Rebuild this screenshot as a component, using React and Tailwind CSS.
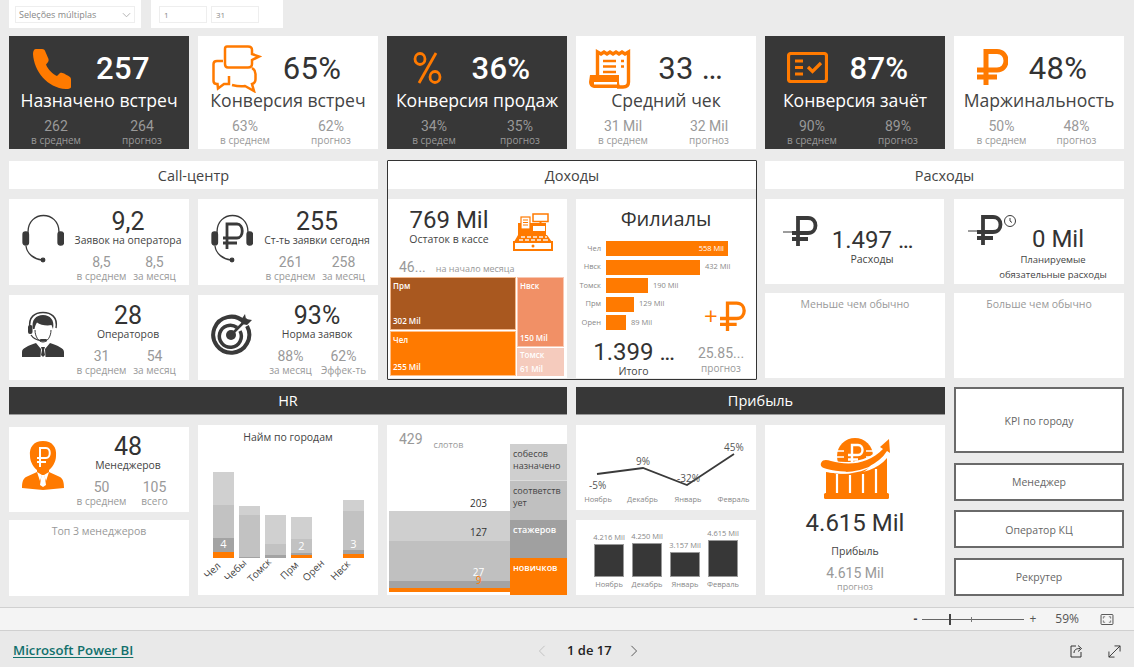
const O = "#ff7a00";
const D = "#3a3a3a";
const Ruble = ({ c = O, w = 4, className = "" }) => (
  <svg viewBox="0 0 32 36" className={className} fill="none" stroke={c} strokeWidth={w}>
    <path d="M10 36V2.500H21C33 2.500 33 21 21 21H1M1 28H21" />
  </svg>
);
const Phone = () => (
  <svg viewBox="0 0 38 40" className="w-[38px] h-[40px] mt-[1px]" fill={O}>
    <path d="M3 0H9C11 0 12 1 12.500 3L15.500 10C16 12 15 13.500 13 15.500C15 21 20 25 24 27L27 24C28.500 23.500 30 23.500 37 28C38 29 38 30 38 31V38C38 39.500 36 40 33 40C14 39 1 22 0 5C0 2 1 0 3 0Z" />
  </svg>
);
const Chat = () => (
  <svg viewBox="0 0 50 48" className="w-[50px] h-[48px]" fill="none" stroke={O} strokeWidth="2.500">
    <path d="M15 1.500H36Q40 1.500 40 5V9L47 11.500L40 15V19Q40 22.500 36 22.500H16Q13 22.500 13 19V4Q13 1.500 15 1.500Z" />
    <path d="M11 16H5Q1.500 16 1.500 19V36Q1.500 39 5 39H5.500L6 43.500L12 39H17V31" />
    <path d="M40 23Q43.500 25 43.500 29V34Q43.500 38 40 39L42 46L33 41Q28 42 20 40" />
  </svg>
);
const Percent = () => (
  <svg viewBox="0 0 29 32" className="w-[29px] h-[32px] -mt-[2px]" fill="none" stroke={O} strokeWidth="2.800">
    <ellipse cx="7" cy="7" rx="5" ry="5.500" />
    <ellipse cx="22" cy="25" rx="5" ry="5.500" />
    <path d="M23 1L6 31" />
  </svg>
);
const Receipt = () => (
  <svg viewBox="0 0 42 40" className="w-[42px] h-[40px]" fill="none" stroke={O} strokeWidth="3.400">
    <path d="M8.500 26V3L12 5L15 3L18 5L21 3L24 5L27 3L30 5L33 3L36 5L39.500 3V33Q39.500 38 34 38H28" />
    <path d="M1 26H30V33Q30 38 34 39H5Q0 38 0 33Z" fill={O} stroke="none" />
    <rect x="5" y="33" width="23" height="2.500" fill="#fff" stroke="none" />
    <path d="M14 12H27M14 17.500H27M14 23H27M32 12H35M32 17.500H35" strokeWidth="2.500" />
  </svg>
);
const Check = () => (
  <svg viewBox="0 0 41 31" className="w-[41px] h-[31px] -mt-[3px]" fill="none" stroke={O} strokeWidth="3.200">
    <rect x="1.500" y="1.500" width="38" height="28" rx="2.500" />
    <path d="M8 9H16M8 15.500H16M8 22H16M21 15L25.500 19.500L34 11" />
  </svg>
);
const Headset = ({ ruble }) => (
  <svg viewBox="0 0 42 50" className="w-[42px] h-[50px]" fill="none" stroke={D} strokeWidth="1.300">
    <path d="M6 20V19C6 -3 37 -3 37 19V20" />
    <rect x="1" y="19" width="5.500" height="13" rx="2.500" fill={D} />
    <rect x="36" y="19" width="5.500" height="13" rx="2.500" fill={D} />
    <path d="M4 33C5 41 12 46 20 47" />
    <circle cx="21" cy="47" r="1.800" fill={D} />
    {ruble && <path d="M16 36V11H26C33 11 33 25 26 25H12M12 30H26" strokeWidth="2.800" />}
  </svg>
);
const Operator = () => (
  <svg viewBox="0 0 42 46" className="w-[42px] h-[46px]" fill={D}>
    <path d="M8 17C6 6 13 1.500 21 1.500C29 1.500 36 6 34 17" fill="none" stroke={D} strokeWidth="1.500" />
    <path d="M11 18C9 9 14 4 21 4C28 4 33 9 31 18L29.500 14C25 15 18 14 15 11.500C14 13 13 15 12.500 18Z" />
    <path d="M13 19C13 26 17 31 21 31C25 31 29 26 29 19" fill="none" stroke={D} strokeWidth="1" />
    <rect x="6" y="14" width="4.500" height="9" rx="2" />
    <path d="M9 24C11 27 14 29 19 29.500" fill="none" stroke={D} strokeWidth="1.300" />
    <rect x="18" y="28" width="7" height="2.500" rx="1" />
    <path d="M0 46V41C0 37 6 35 14 32L19 38L18.500 46H23.500L23 38L28 32C36 35 42 37 42 41V46Z" />
    <path d="M19 36H23L22 39L23 44L21 46L19 44L20 39Z" />
  </svg>
);
const Target = () => (
  <svg viewBox="0 0 42 42" className="w-[42px] h-[42px]" fill="none" stroke={D}>
    <path d="M33 9A18 18 0 1 0 36 13" strokeWidth="4" />
    <path d="M26 14.500A11 11 0 1 0 29 18" strokeWidth="3.500" />
    <circle cx="20" cy="22" r="5" fill={D} stroke="none" />
    <path d="M20 22L36 6" strokeWidth="2.500" />
    <path d="M30 7L34 1L35 6L41 7L36 12L31 11Z" fill={D} stroke="none" />
  </svg>
);
const Register = () => (
  <svg viewBox="0 0 42 38" className="w-[42px] h-[38px]">
    <path d="M5 10H33V23H5Z" fill={O} />
    <rect x="8" y="4" width="9" height="12" fill="#fff" stroke={O} strokeWidth="1.200" />
    <path d="M10 7H15M10 9.500H15M10 12H15" stroke={O} strokeWidth="1" />
    <rect x="20" y="1" width="15" height="7.500" fill="#fff" stroke={O} strokeWidth="1.500" />
    <path d="M27.500 8V11" stroke={O} strokeWidth="2" />
    <rect x="20" y="13" width="12" height="5" fill="#fff" />
    <path d="M5 22H34L39 29H1Z" fill={O} />
    <path d="M8 24H12M14 24H18M20 24H24M26 24H30M32 24H34M6 27H10M12 27H16M18 27H22M24 27H28M30 27H35" stroke="#fbd3ae" strokeWidth="2" />
    <rect x="1" y="29" width="38" height="8" fill="#fff" stroke={O} strokeWidth="2" />
    <circle cx="20" cy="33" r="1.500" fill={O} />
  </svg>
);
const Manager = () => (
  <svg viewBox="0 0 42 49" className="w-[42px] h-[49px]">
    <path d="M21 0C30 0 35 6 34 15C34 21 30 27 27 29L27 31L38 36C41 38 42 41 42 47L21 49L0 47C0 41 1 38 4 36L15 31L15 29C12 27 8 21 8 15C7 6 12 0 21 0Z" fill={O} />
    <path d="M15 31L20 34L18 40ZM27 31L22 34L24 40Z" fill="#fff" />
    <path d="M19.500 34H22.500L24 44L21 46L18 44Z" fill="#fff" />
    <path d="M18 26V7H24C29 7 29 17 24 17H15M15 21H24" stroke="#fff" strokeWidth="2" fill="none" />
  </svg>
);
const Profit = () => (
  <svg viewBox="0 0 72 62" className="w-[72px] h-[62px]">
    <circle cx="36" cy="18" r="18" fill={O} />
    <path d="M17 13H25M17 19H25M47 13H55M47 19H55" stroke="#fff" strokeWidth="1.500" />
    <path d="M33 26V7H39C45 7 45 17 39 17H29M29 21.500H39" stroke="#fff" strokeWidth="2.400" fill="none" />
    <path d="M5 21C20 29 50 29 64 9" stroke="#fff" strokeWidth="4" fill="none" />
    <path d="M7 34C30 38 55 36 68 20V56H7Z" fill={O} />
    <path d="M2 25C4 21 8 22 12 23C30 28 50 26 64 11L61 9L70 1L71 15L68 13C56 32 30 37 8 31C3 30 1 28 2 25Z" fill={O} />
    <path d="M8 33C30 38 56 33 69 14" stroke="#fff" strokeWidth="1.300" fill="none" />
    <path d="M18 36V55M31 37V55M44 36V55M57 31V55" stroke="#fff" strokeWidth="2.200" />
    <rect x="5" y="55" width="65" height="6" rx="1.500" fill={O} />
  </svg>
);
const RubMinus = ({ clock }) => (
  <svg viewBox="0 0 50 34" className="w-[50px] h-[34px]" fill="none" stroke={D} strokeWidth="3.800">
    <path d="M15 30V2H25C35 2 35 17 25 17H9M9 23H25" />
    <path d="M0 16H9" strokeWidth="1" />
    {clock && (
      <g strokeWidth="1">
        <circle cx="42" cy="6" r="5.500" />
        <path d="M42 3V6L44 7.500" />
      </g>
    )}
  </svg>
);
const Ell = () => <span className="tracking-[-1.500px]">...</span>;

const KPI = ({ dark, icon, value, label, a, al, b, bl, w = "w-[180px]", left = "w-[80px]", subs = "px-[4px]", pad = "pl-[24px]" }) => (
  <div className={`${w} h-[113px] flex flex-col shrink-0 ${dark ? "bg-[#373737] text-white" : "bg-white text-[#333]"}`}>
    <div className="h-[53px] flex items-center pt-[12px]">
      <div className={`${left} ${pad} flex items-start shrink-0`}>{icon}</div>
      <div className={`w-[68px] text-center whitespace-nowrap text-[31px] leading-[32px] tracking-[0.3px] ${dark ? "font-medium" : ""} font-['Roboto',sans-serif]`}>{value}</div>
    </div>
    <div className={`-mt-[1px] h-[24px] leading-[24px] text-center whitespace-nowrap text-[17.600px] ${dark ? "" : "text-[#444]"}`}>{label}</div>
    <div className={`grid grid-cols-2 mt-[6px] text-center ${subs}`}>
      <Sub v={a} l={al} />
      <Sub v={b} l={bl} />
    </div>
  </div>
);
const Sub = ({ v, l }) => (
  <div className="flex flex-col items-center text-[#999]">
    <span className="text-[14px] leading-[16px] whitespace-nowrap font-['Roboto',sans-serif]">{v}</span>
    <span className="text-[10px] leading-[12px] whitespace-nowrap">{l}</span>
  </div>
);
const Header = ({ children, dark, className = "" }) => (
  <div className={`h-[28px] flex items-center justify-center text-[14.500px] ${dark ? "bg-[#373737] text-white border-b border-[#999]" : "bg-white text-[#444] pt-[1px]"} ${className}`}>{children}</div>
);
const Small = ({ icon, value, label, a, al, b, bl, h = "h-[86px]", vm = "pt-[10px]" }) => (
  <div className={`w-[180px] ${h} bg-white flex shrink-0`}>
    <div className="w-[66px] shrink-0 pl-[13px] pb-[8px] flex items-center">{icon}</div>
    <div className={`w-[106px] flex flex-col items-center ${vm}`}>
      <div className="text-[25px] leading-[26px] text-[#333] font-['Roboto',sans-serif]">{value}</div>
      <div className="-mt-[2px] text-[10.400px] leading-[14px] whitespace-nowrap text-[#444]">{label}</div>
      <div className="grid grid-cols-2 w-full mt-[7px]">
        <Sub v={a} l={al} />
        <Sub v={b} l={bl} />
      </div>
    </div>
  </div>
);
const BarRow = ({ name, w, val, inside }) => (
  <div className="flex items-center h-[15px]">
    <div className="w-[25px] text-right text-[7.500px] text-[#888] shrink-0 whitespace-nowrap">{name}</div>
    <div className={`ml-[5px] h-[15px] bg-[#ff7a00] flex items-center justify-end pr-[4px] text-[7.500px] text-white whitespace-nowrap ${w}`}>{inside}</div>
    {val && <div className="ml-[5px] text-[7.500px] text-[#888] whitespace-nowrap">{val}</div>}
  </div>
);
const Col = ({ a, b, c, d, pos, v }) => (
  <div className="w-[21px] flex flex-col relative">
    <div className={`${a} bg-[#d0d0d0]`} />
    <div className={`${b} bg-[#c2c2c2]`} />
    <div className={`${c} bg-[#a3a3a3]`} />
    <div className={`${d} bg-[#ff7a00]`} />
    {pos && <div className={`absolute inset-x-0 text-center text-[11px] text-white leading-[14px] ${pos}`}>{v}</div>}
  </div>
);
const Btn = ({ h, children }) => (
  <div className={`${h} border-2 border-[#6a6a6a] bg-white flex items-center justify-center pt-[3px] text-[10.500px] text-[#666]`}>{children}</div>
);
const XLabel = ({ children, className = "" }) => (
  <span className={`w-[22px] h-[14px] leading-[14px] whitespace-nowrap text-[10px] text-[#444] -rotate-45 origin-center flex justify-center ${className}`}>{children}</span>
);
const MonthBar = ({ h, v, m }) => (
  <div className="w-[30px] flex flex-col items-center justify-end">
    <span className="text-[7.500px] text-[#888] whitespace-nowrap leading-[14px]">{v}</span>
    <div className={`w-[30px] ${h} bg-[#373737] border border-[#999]`} />
    <span className="text-[7.500px] whitespace-nowrap leading-[9px] mt-[3px] text-[#888]">{m}</span>
  </div>
);

export default function App() {
  return (
    <div className="w-[1134px] h-[667px] bg-[#ebebeb] overflow-hidden flex flex-col font-['Open_Sans','Noto_Sans',sans-serif]">
      <main className="h-[607px] pl-[9px] flex flex-col">
        <div className="h-[28px] flex gap-[10px]">
          <div className="w-[132px] bg-white px-[6px] pt-[6px]">
            <div className="h-[17px] border border-[#eee] flex items-center justify-between px-[3px] text-[9px] text-[#888]">
              Seleções múltiplas
              <svg viewBox="0 0 10 6" className="w-[9px] h-[6px]" fill="none" stroke="#aaa"><path d="M1 1L5 5L9 1" /></svg>
            </div>
          </div>
          <div className="w-[132px] bg-white pl-[8px] pt-[6px] flex gap-[4px]">
            <div className="w-[48px] h-[17px] border border-[#eee] text-[8px] text-[#888] pl-[4px] leading-[15px]">1</div>
            <div className="w-[48px] h-[17px] border border-[#eee] text-[8px] text-[#888] pl-[4px] leading-[15px]">31</div>
          </div>
        </div>

        <div className="mt-[8px] flex gap-[9px]">
          <KPI dark icon={<Phone />} value="257" label="Назначено встреч" a="262" al="в среднем" b="264" bl="прогноз" />
          <KPI icon={<Chat />} pad="pl-[14px]" value="65%" label="Конверсия встреч" a="63%" al="в среднем" b="62%" bl="прогноз" />
          <KPI dark icon={<Percent />} pad="pl-[26px]" value="36%" label="Конверсия продаж" a="34%" al="в средем" b="35%" bl="прогноз" />
          <KPI icon={<Receipt />} pad="pl-[13px]" value={<>33 <Ell /></>} label="Средний чек" a="31 Mil" al="в среднем" b="32 Mil" bl="прогноз" />
          <KPI dark icon={<Check />} value="87%" pad="pl-[22px]" label="Конверсия зачёт" a="90%" al="в среднем" b="89%" bl="прогноз" />
          <KPI w="w-[170px]" left="w-[70px]" pad="pl-[22px]" subs="px-[10px]" icon={<Ruble w={5} className="w-[32px] h-[36px] -mt-[3px]" />} value="48%" label="Маржинальность" a="50%" al="в среднем" b="48%" bl="прогноз" />
        </div>

        <div className="mt-[11px] h-[220px] flex gap-[9px]">
          <div className="w-[369px] pt-[1px] flex flex-col">
            <Header>Call-центр</Header>
            <div className="flex gap-[9px] mt-[10px]">
              <Small icon={<Headset />} value="9,2" label="Заявок на оператора" a="8,5" al="в среднем" b="8,5" bl="за месяц" />
              <Small icon={<Headset ruble />} value="255" label="Ст-ть заявки сегодня" a="261" al="в среднем" b="258" bl="за месяц" />
            </div>
            <div className="flex gap-[9px] mt-[10px]">
              <Small h="h-[85px]" vm="pt-[8px]" icon={<Operator />} value="28" label="Операторов" a="31" al="в среднем" b="54" bl="за месяц" />
              <Small h="h-[85px]" vm="pt-[8px]" icon={<Target />} value="93%" label="Норма заявок" a="88%" al="за месяц" b="62%" bl="Эффек-ть" />
            </div>
          </div>

          <div className="w-[370px] h-[220px] border border-[#333] rounded-[1px] flex flex-col">
            <Header>Доходы</Header>
            <div className="flex mt-[10px] gap-[9px]">
              <div className="w-[179px] h-[179px] bg-white flex flex-col">
                <div className="h-[56px] flex pt-[8px] items-start">
                  <div className="w-[122px] flex flex-col items-center">
                    <span className="text-[24px] leading-[27px] text-[#333] whitespace-nowrap font-['Roboto',sans-serif]">769 Mil</span>
                    <span className="-mt-[1px] text-[10.500px] leading-[13px] text-[#444] whitespace-nowrap">Остаток в кассе</span>
                  </div>
                  <div className="ml-[3px] mt-[6px]"><Register /></div>
                </div>
                <div className="h-[21px] flex items-end pl-[11px] text-[#999]">
                  <span className="text-[14px] leading-[18px] font-['Roboto',sans-serif]">46...</span>
                  <span className="ml-[10px] text-[9px] leading-[14px] whitespace-nowrap">на начало месяца</span>
                </div>
                <div className="mt-[1px] ml-[2px] w-[175px] h-[99px] flex gap-[1px] text-[8px] text-white font-semibold">
                  <div className="w-[126px] flex flex-col gap-[1px]">
                    <div className="h-[53px] bg-[#a9581f] border border-[#f3b78a] flex flex-col justify-between px-[2px] py-[2px]"><span>Прм</span><span>302 Mil</span></div>
                    <div className="h-[45px] bg-[#ff7a00] border border-[#ffc08a] flex flex-col justify-between px-[2px] py-[2px]"><span>Чел</span><span>255 Mil</span></div>
                  </div>
                  <div className="w-[47px] flex flex-col gap-[1px]">
                    <div className="h-[70px] bg-[#f19066] border border-[#f9c8b2] flex flex-col justify-between px-[2px] py-[2px]"><span>Нвск</span><span>150 Mil</span></div>
                    <div className="h-[28px] bg-[#f5cbbd] flex flex-col justify-between px-[3px] py-[1px]"><span>Томск</span><span>61 Mil</span></div>
                  </div>
                </div>
              </div>
              <div className="w-[180px] h-[179px] bg-white flex flex-col">
                <div className="text-center text-[20px] leading-[26px] pt-[7px] h-[38px] text-[#333]">Филиалы</div>
                <div className="relative flex flex-col gap-[3.500px] mt-[5px]">
                  <BarRow name="Чел" w="w-[122px]" inside="558 Mil" />
                  <BarRow name="Нвск" w="w-[94px]" val="432 Mil" />
                  <BarRow name="Томск" w="w-[42px]" val="190 Mil" />
                  <BarRow name="Прм" w="w-[28px]" val="129 Mil" />
                  <BarRow name="Орен" w="w-[20px]" val="89 Mil" />
                  <div className="absolute left-[128px] top-[60px] flex items-center">
                    <span className="text-[24px] leading-[24px] text-[#ff7a00] mr-[1px]">+</span>
                    <Ruble w={4} className="w-[27px] h-[30px]" />
                  </div>
                </div>
                <div className="flex mt-[9px]">
                  <div className="w-[115px] flex flex-col items-center">
                    <span className="text-[24px] leading-[27px] text-[#333] whitespace-nowrap font-['Roboto',sans-serif]">1.399 <Ell /></span>
                    <span className="-mt-[1px] text-[10.500px] leading-[13px] text-[#444]">Итого</span>
                  </div>
                  <div className="w-[60px] flex flex-col items-center pt-[6px] text-[#999]">
                    <span className="text-[14px] leading-[17px] font-['Roboto',sans-serif]">25.85...</span>
                    <span className="text-[10px] leading-[13px]">прогноз</span>
                  </div>
                </div>
              </div>
            </div>
          </div>

          <div className="w-[359px] pt-[1px] flex flex-col ml-[-1px]">
            <Header>Расходы</Header>
            <div className="flex gap-[10px] mt-[10px]">
              <div className="w-[179px] h-[85px] bg-white flex pl-[18px] pt-[17px]">
                <RubMinus />
                <div className="w-[84px] ml-[-3px] mt-[11px] flex flex-col items-center">
                  <span className="text-[24px] leading-[26px] text-[#333] whitespace-nowrap font-['Roboto',sans-serif]">1.497 <Ell /></span>
                  <span className="-mt-[1px] text-[10.500px] leading-[14px] text-[#444]">Расходы</span>
                </div>
              </div>
              <div className="w-[170px] h-[85px] bg-white flex pl-[14px] pt-[16px]">
                <RubMinus clock />
                <div className="w-[118px] ml-[-24px] mt-[11px] flex flex-col items-center text-center">
                  <span className="ml-[10px] text-[24px] leading-[26px] text-[#333] whitespace-nowrap font-['Roboto',sans-serif]">0 Mil</span>
                  <span className="text-[9.500px] leading-[15px] text-[#444] whitespace-nowrap">Планируемые<br />обязательные расходы</span>
                </div>
              </div>
            </div>
            <div className="flex gap-[9px] mt-[9px]">
              <div className="w-[180px] h-[85px] bg-white text-center text-[10.500px] leading-[22px] text-[#999]">Меньше чем обычно</div>
              <div className="w-[170px] h-[85px] bg-white text-center text-[10.500px] leading-[22px] text-[#999]">Больше чем обычно</div>
            </div>
          </div>
        </div>

        <div className="mt-[7px] flex gap-[9px]">
          <div className="w-[558px] flex flex-col">
            <Header dark>HR</Header>
            <div className="flex gap-[9px] mt-[10px]">
              <div className="w-[180px] flex flex-col pt-[2px]">
                <Small h="h-[85px]" vm="pt-[7px]" icon={<Manager />} value="48" label="Менеджеров" a="50" al="в среднем" b="105" bl="всего" />
                <div className="mt-[8px] h-[76px] bg-white text-center text-[10.500px] leading-[22px] text-[#999]">Топ 3 менеджеров</div>
              </div>
              <div className="w-[180px] h-[170px] bg-white flex flex-col">
                <div className="text-center text-[10.500px] leading-[24px] h-[47px] text-[#444]">Найм по городам</div>
                <div className="h-[86px] flex items-end gap-[5px] pl-[15px]">
                  <Col a="h-[33px]" b="h-[33px]" c="h-[14px]" d="h-[6px]" pos="bottom-[7px]" v="4" />
                  <Col a="h-[9px]" b="h-[42px]" c="h-[1px]" d="h-0" />
                  <Col a="h-[29px]" b="h-[11px]" c="h-[3px]" d="h-0" />
                  <Col a="h-[22px]" b="h-[14px]" c="h-[2px]" d="h-[3px]" pos="bottom-[5px]" v="2" />
                  <div className="w-[21px]" />
                  <Col a="h-[11px]" b="h-[39px]" c="h-[4px]" d="h-[4px]" pos="bottom-[7px]" v="3" />
                </div>
                <div className="flex pl-[3px] mt-[5px]">
                  <XLabel>Чел</XLabel>
                  <XLabel className="ml-[1px]">Чебы</XLabel>
                  <XLabel className="ml-[2px]">Томск</XLabel>
                  <XLabel className="ml-[8px]">Прм</XLabel>
                  <XLabel className="ml-[2px]">Орен</XLabel>
                  <XLabel className="ml-[5px]">Нвск</XLabel>
                </div>
              </div>
              <div className="w-[180px] h-[170px] bg-white flex">
                <div className="w-[123px] flex flex-col pl-[2px]">
                  <div className="h-[49px] pl-[10px] pt-[5px] flex items-start text-[#999]">
                    <span className="text-[14px] leading-[18px] font-['Roboto',sans-serif]">429</span>
                    <span className="ml-[11px] mt-[9px] text-[9px] leading-[12px]">слотов</span>
                  </div>
                  <div className="h-[37px] flex items-end justify-center pl-[58px] text-[10px] leading-[12px] text-[#333] pb-[2px]">203</div>
                  <div className="h-[30px] bg-[#cfcfcf] flex items-end justify-center pl-[58px] text-[10px] leading-[12px] text-[#333] pb-[3px]">127</div>
                  <div className="h-[40px] bg-[#c0c0c0] flex items-end justify-center pl-[58px] text-[10px] leading-[12px] text-white pb-[3px]">27</div>
                  <div className="h-[7px] bg-[#a3a3a3] flex justify-center pl-[58px]"><span className="-mt-[7px] text-[10px] leading-[12px] text-[#ff7a00]">9</span></div>
                  <div className="h-[4px] bg-[#ff7a00]" />
                </div>
                <div className="w-[57px] mt-[19px] flex flex-col text-[9px] leading-[12px]">
                  <div className="h-[37px] bg-[#cfcfcf] text-[#444] pl-[3px] pt-[4px] border-b border-[#ddd]">собесов назначено</div>
                  <div className="h-[39px] bg-[#c0c0c0] text-[#444] pl-[3px] pt-[4px]">соответств<br />ует</div>
                  <div className="h-[38px] bg-[#a0a0a0] text-white font-semibold pl-[3px] pt-[4px]">стажеров</div>
                  <div className="h-[37px] bg-[#ff7a00] text-white font-semibold pl-[3px] pt-[4px]">новичков</div>
                </div>
              </div>
            </div>
          </div>

          <div className="w-[369px] flex flex-col">
            <Header dark>Прибыль</Header>
            <div className="flex gap-[9px] mt-[10px]">
              <div className="w-[180px] flex flex-col gap-[10px]">
                <div className="h-[85px] bg-white relative">
                  <svg viewBox="0 0 180 85" className="w-[180px] h-[85px]">
                    <path d="M21 49L67 43L111 60L158 29" stroke="#3a3a3a" strokeWidth="1.800" fill="none" />
                  </svg>
                  <span className="absolute left-[13px] top-[53px] text-[10px] text-[#555] leading-[14px]">-5%</span>
                  <span className="absolute left-[60px] top-[29px] text-[10px] text-[#555] leading-[14px]">9%</span>
                  <span className="absolute left-[101px] top-[46px] text-[10px] text-[#555] leading-[14px]">-32%</span>
                  <span className="absolute left-[148px] top-[15px] text-[10px] text-[#555] leading-[14px]">45%</span>
                  <div className="absolute left-0 right-0 top-[69px] flex text-[7.500px] text-[#888]">
                    <span className="w-[44px] text-center">Ноябрь</span>
                    <span className="w-[45px] text-center">Декабрь</span>
                    <span className="w-[46px] text-center">Январь</span>
                    <span className="w-[45px] text-center">Февраль</span>
                  </div>
                </div>
                <div className="h-[75px] bg-white flex items-end justify-start gap-[8px] pl-[18px] pb-[6px]">
                  <MonthBar h="h-[33px]" v="4.216 Mil" m="Ноябрь" />
                  <MonthBar h="h-[34px]" v="4.250 Mil" m="Декабрь" />
                  <MonthBar h="h-[25px]" v="3.157 Mil" m="Январь" />
                  <MonthBar h="h-[37px]" v="4.615 Mil" m="Февраль" />
                </div>
              </div>
              <div className="w-[180px] h-[170px] bg-white flex flex-col items-center pt-[13px]">
                <Profit />
                <span className="mt-[7px] text-[24px] leading-[32px] text-[#333] whitespace-nowrap font-['Roboto',sans-serif]">4.615 Mil</span>
                <span className="mt-[5px] text-[10.500px] leading-[14px] text-[#444]">Прибыль</span>
                <span className="mt-[7px] text-[14px] leading-[16px] text-[#999] font-['Roboto',sans-serif]">4.615 Mil</span>
                <span className="text-[9px] leading-[11px] text-[#999]">прогноз</span>
              </div>
            </div>
          </div>

          <div className="w-[170px] flex flex-col gap-[9.500px]">
            <Btn h="h-[66px]">KPI по городу</Btn>
            <Btn h="h-[38px]">Менеджер</Btn>
            <Btn h="h-[38px]">Оператор КЦ</Btn>
            <Btn h="h-[38px]">Рекрутер</Btn>
          </div>
        </div>
      </main>

      <div className="h-[24px] bg-[#f4f4f4] border-y border-[#d0d0d0] flex items-center justify-end text-[#555] text-[12px] leading-none">
        <span className="text-[#444] font-bold mr-[4px]">-</span>
        <div className="w-[102px] h-[1px] bg-[#666] relative mr-[5px] ml-[1px]">
          <span className="absolute left-[27px] -top-[5px] w-[2px] h-[11px] bg-[#444]" />
          <span className="absolute left-[49px] -top-[2px] w-[1px] h-[5px] bg-[#777]" />
        </div>
        <span className="mr-[19px]">+</span>
        <span className="mr-[21px]">59%</span>
        <svg viewBox="0 0 14 12" className="w-[14px] h-[11px] mr-[20px]" fill="none" stroke="#444"><rect x="0.500" y="0.500" width="13" height="11" rx="1" /><path d="M3 5V3H5M9 3H11V5M3 7V9H5M11 7V9H9" strokeWidth="0.700" /></svg>
      </div>
      <footer className="flex-1 bg-[#e9e9e9] flex items-center relative pl-[13px] pt-[4px]">
        <a className="text-[13.200px] font-semibold text-[#11706c] underline underline-offset-2">Microsoft Power BI</a>
        <div className="absolute left-[538px] flex items-center">
          <svg viewBox="0 0 8 14" className="w-[8px] h-[12px]" fill="none" stroke="#bbb"><path d="M7 1L1 7L7 13" /></svg>
          <span className="ml-[21px] text-[13px] font-semibold text-[#222] whitespace-nowrap">1 de 17</span>
          <svg viewBox="0 0 8 14" className="w-[8px] h-[12px] ml-[18px]" fill="none" stroke="#444"><path d="M1 1L7 7L1 13" /></svg>
        </div>
        <div className="absolute right-[13px] flex items-center gap-[25px]">
          <svg viewBox="0 0 14 14" className="w-[14px] h-[14px]" fill="none" stroke="#333"><path d="M7 2H2V13H12V8" /><path d="M5 9C5 6 7 4.500 11 4.500M9 1.500L12.500 4.500L9 7.500" /></svg>
          <svg viewBox="0 0 14 14" className="w-[13px] h-[13px]" fill="none" stroke="#333"><path d="M1 13L13 1M7 1H13V7M1 7V13H7" /></svg>
        </div>
      </footer>
    </div>
  );
}
